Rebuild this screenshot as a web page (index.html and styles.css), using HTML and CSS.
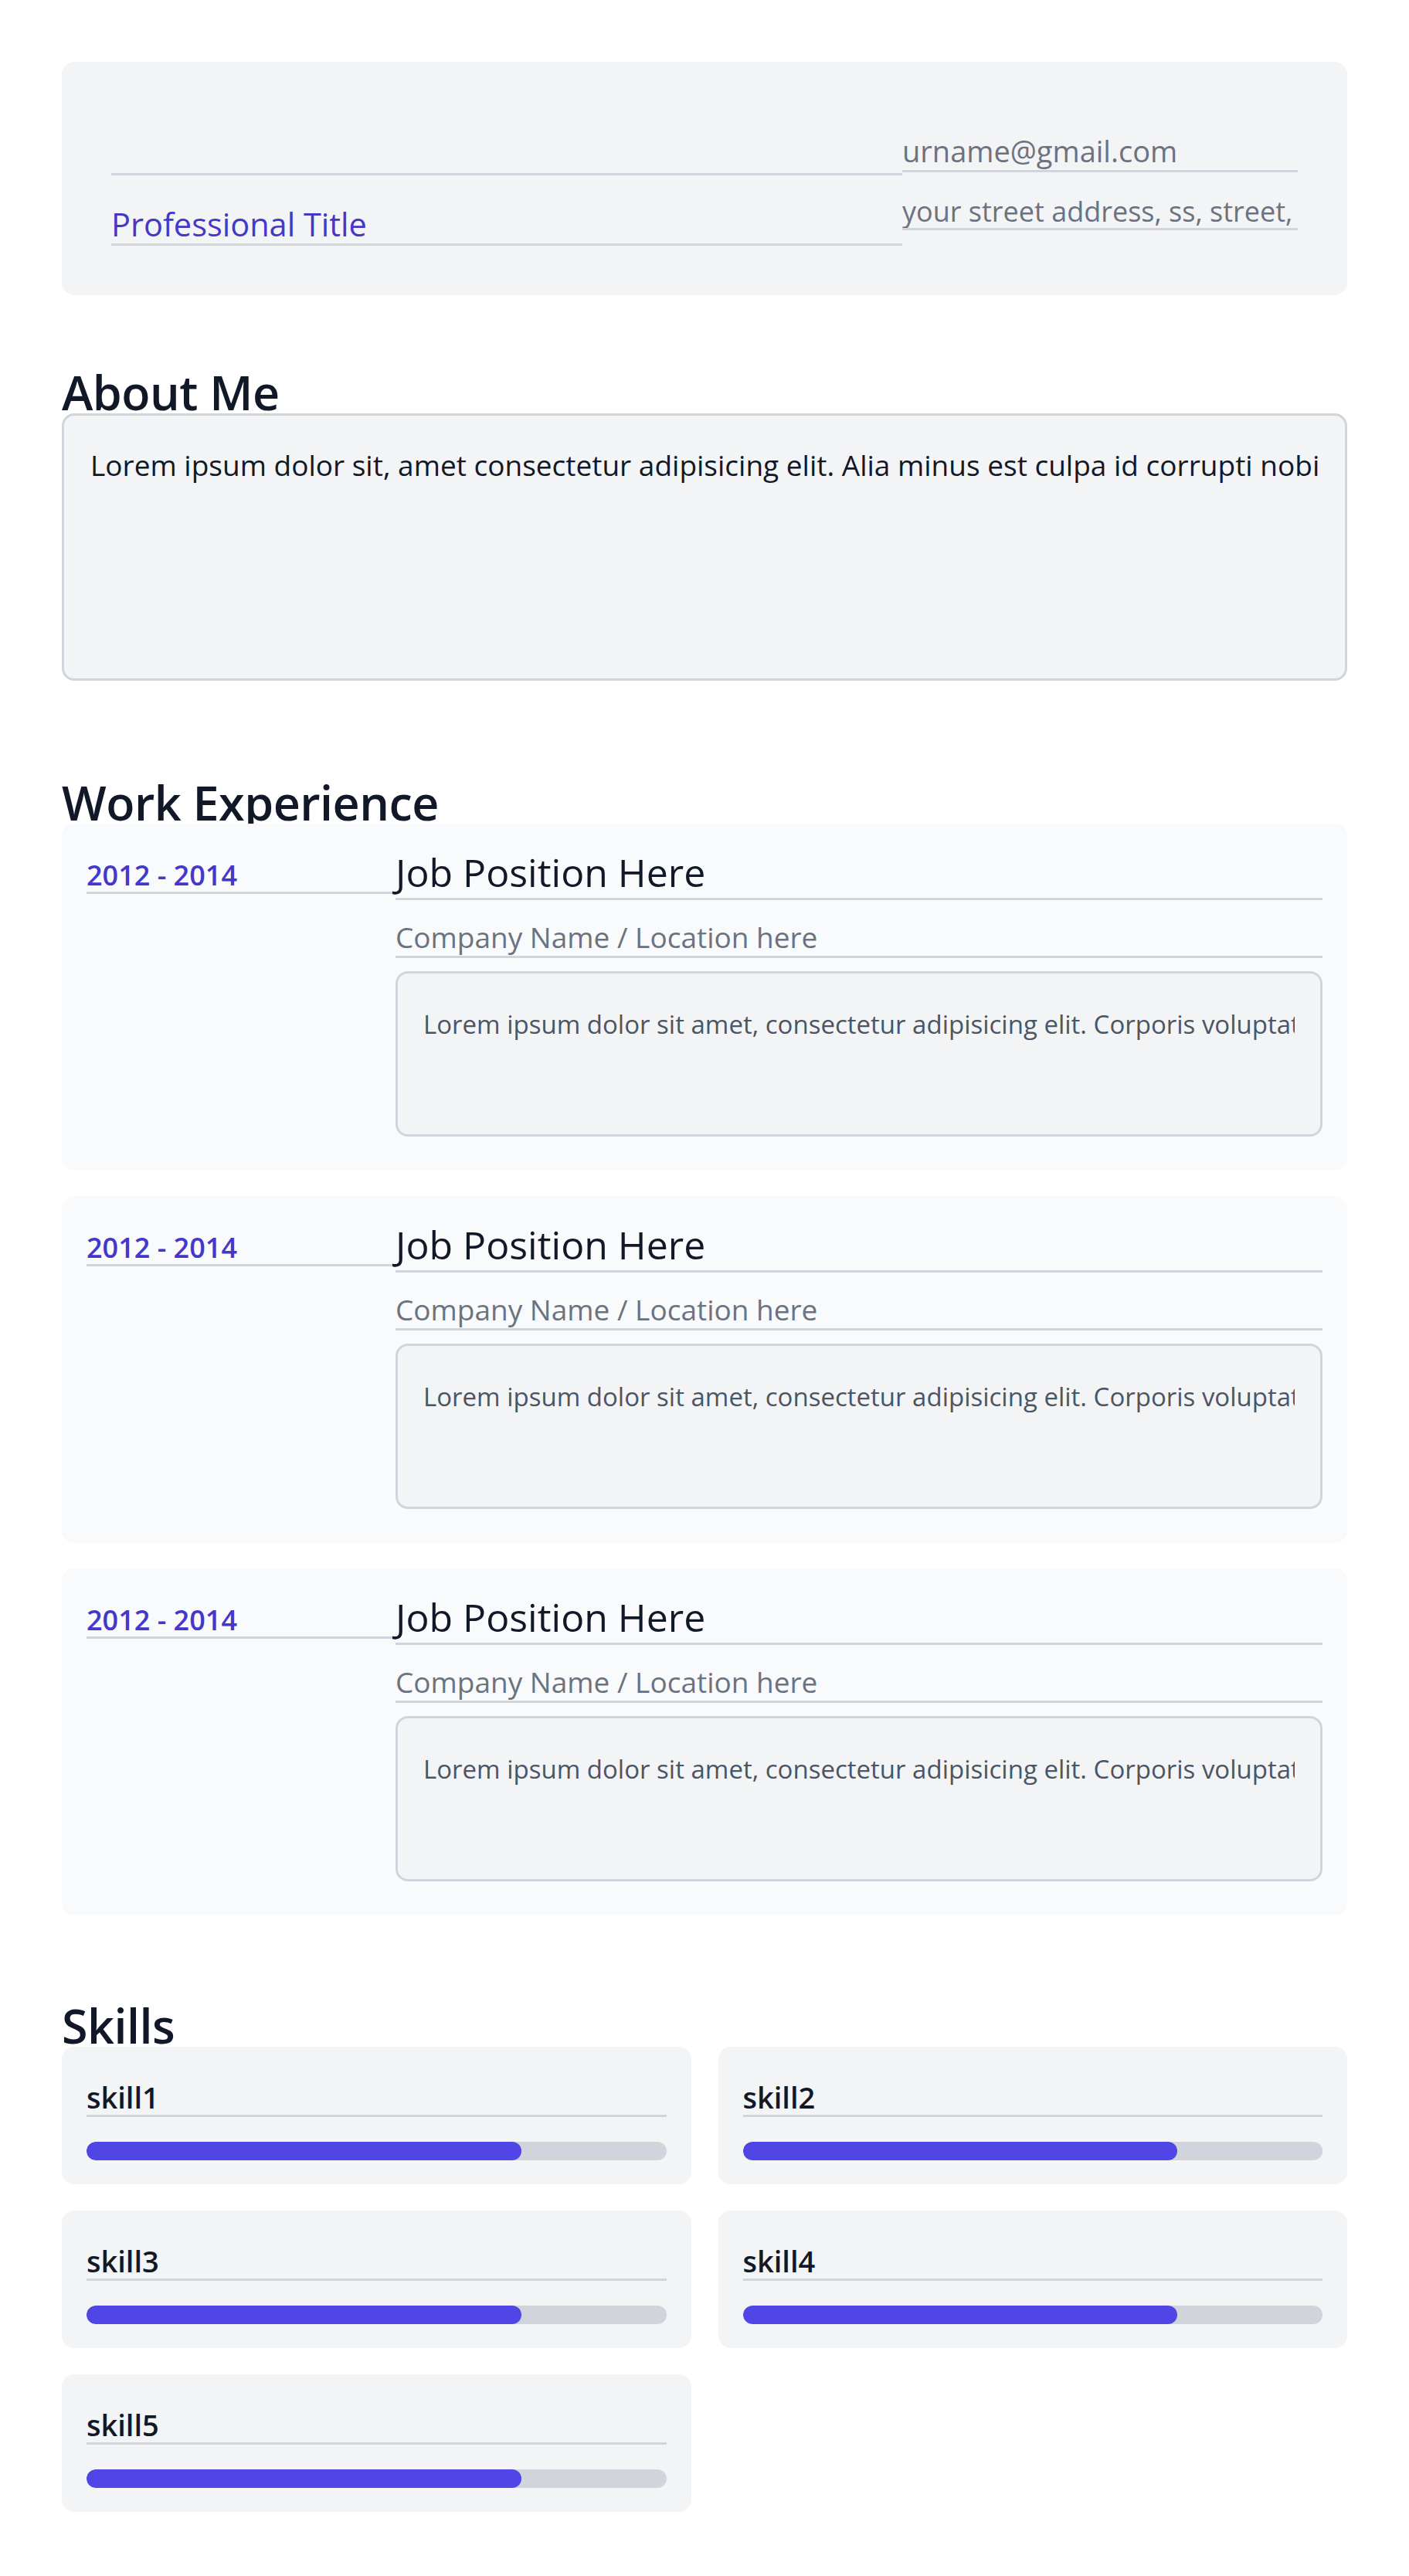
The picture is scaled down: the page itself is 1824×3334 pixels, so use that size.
FILE: index.html
```html
<!DOCTYPE html>
<html lang="en">
<head>
<meta charset="utf-8">
<title>Resume</title>
<link rel="stylesheet" href="styles.css">
</head>
<body>
<main class="page">
  <section class="header-card">
    <div class="header-main">
      <div class="field field-name"></div>
      <div class="field field-title">Professional Title</div>
    </div>
    <div class="header-side">
      <div class="field field-email">urname@gmail.com</div>
      <div class="field field-address">your street address, ss, street, city, state, country</div>
    </div>
  </section>

  <h2 class="section-title about-title">About Me</h2>
  <div class="about-box"><div class="clip-text">Lorem ipsum dolor sit, amet consectetur adipisicing elit. Alia minus est culpa id corrupti nobis ullam harum, porro veniam facilis.</div></div>

  <h2 class="section-title work-title">Work Experience</h2>
  <div class="jobs">
    <article class="job-card">
      <div class="field field-date">2012 - 2014</div>
      <div class="job-main">
        <div class="field field-position">Job Position Here</div>
        <div class="field field-company">Company Name / Location here</div>
        <div class="job-desc"><div class="clip-text">Lorem ipsum dolor sit amet, consectetur adipisicing elit. Corporis voluptatibus, quia rem.</div></div>
      </div>
    </article>
    <article class="job-card">
      <div class="field field-date">2012 - 2014</div>
      <div class="job-main">
        <div class="field field-position">Job Position Here</div>
        <div class="field field-company">Company Name / Location here</div>
        <div class="job-desc"><div class="clip-text">Lorem ipsum dolor sit amet, consectetur adipisicing elit. Corporis voluptatibus, quia rem.</div></div>
      </div>
    </article>
    <article class="job-card">
      <div class="field field-date">2012 - 2014</div>
      <div class="job-main">
        <div class="field field-position">Job Position Here</div>
        <div class="field field-company">Company Name / Location here</div>
        <div class="job-desc"><div class="clip-text">Lorem ipsum dolor sit amet, consectetur adipisicing elit. Corporis voluptatibus, quia rem.</div></div>
      </div>
    </article>
  </div>

  <h2 class="section-title skills-title">Skills</h2>
  <div class="skills">
    <div class="skill-card">
      <div class="field field-skill">skill1</div>
      <div class="bar"><div class="bar-fill" style="width: 75%"></div></div>
    </div>
    <div class="skill-card">
      <div class="field field-skill">skill2</div>
      <div class="bar"><div class="bar-fill" style="width: 75%"></div></div>
    </div>
    <div class="skill-card">
      <div class="field field-skill">skill3</div>
      <div class="bar"><div class="bar-fill" style="width: 75%"></div></div>
    </div>
    <div class="skill-card">
      <div class="field field-skill">skill4</div>
      <div class="bar"><div class="bar-fill" style="width: 75%"></div></div>
    </div>
    <div class="skill-card">
      <div class="field field-skill">skill5</div>
      <div class="bar"><div class="bar-fill" style="width: 75%"></div></div>
    </div>
  </div>
</main>
</body>
</html>
```

FILE: styles.css
```css
* { box-sizing: border-box; }

body {
  margin: 0;
  background: #ffffff;
  font-family: "Open Sans", "Noto Sans", "Liberation Sans", sans-serif;
  color: #111827;
}

.page {
  padding: 80px 80px 83px;
}

/* generic underlined field */
.field {
  border-bottom: 3px solid #d1d5db;
  line-height: 1.25;
  white-space: nowrap;
}

.clip-text {
  white-space: nowrap;
  overflow: hidden;
  line-height: 1.4;
}

/* header */
.header-card {
  background: #f3f4f6;
  border-radius: 16px;
  padding: 64px;
  display: grid;
  grid-template-columns: 1024px 512px;
  align-items: start;
}
.header-main, .header-side {
  display: flex;
  flex-direction: column;
  min-width: 0;
}
.field-name { height: 83px; }
.field-title {
  height: 91px;
  padding-top: 38px;
  font-size: 41.5px;
  color: #4338ca;
}
.field-email {
  height: 79px;
  padding-top: 28px;
  font-size: 38px;
  color: #6b7280;
}
.field-address {
  height: 75px;
  padding-top: 28px;
  font-size: 36px;
  color: #6b7280;
  overflow: hidden;
}

/* section titles */
.section-title {
  margin: 0;
  font-size: 61px;
  font-weight: 600;
  letter-spacing: -0.5px;
  line-height: 55px;
  height: 55px;
  overflow: hidden;
  color: #111827;
}
.about-title { margin-top: 98px; }
.work-title { margin-top: 130px; }
.skills-title { margin-top: 115px; }

/* about */
.about-box {
  height: 346px;
  background: #f3f4f6;
  border: 3px solid #d1d5db;
  border-radius: 16px;
  padding: 38px 34px 0;
  font-size: 37px;
  color: #111827;
}

/* work */
.jobs {
  display: flex;
  flex-direction: column;
  gap: 33px;
}
.job-card {
  background: #f9fafb;
  border-radius: 16px;
  padding: 32px 32px 44px;
  display: grid;
  grid-template-columns: 400px minmax(0, 1fr);
  align-items: start;
}
.field-date {
  height: 59px;
  padding-top: 12px;
  font-size: 36px;
  font-weight: 600;
  color: #4338ca;
}
.job-main {
  display: flex;
  flex-direction: column;
  min-width: 0;
}
.field-position {
  height: 67px;
  padding-top: 0;
  font-size: 50px;
  font-weight: 500;
  color: #111827;
}
.field-company {
  height: 75px;
  padding-top: 25px;
  font-size: 37px;
  color: #6b7280;
}
.job-desc {
  margin-top: 17px;
  height: 214px;
  background: #f3f4f6;
  border: 3px solid #d1d5db;
  border-radius: 16px;
  padding: 43px 33px 0;
  font-size: 33px;
  color: #4b5563;
}

/* skills */
.skills {
  display: grid;
  grid-template-columns: 1fr 1fr;
  column-gap: 35px;
  row-gap: 34px;
}
.skill-card {
  background: #f3f4f6;
  border-radius: 16px;
  padding: 32px 32px 31px;
}
.field-skill {
  height: 59px;
  padding-top: 10px;
  font-size: 38px;
  font-weight: 600;
  color: #111827;
}
.bar {
  margin-top: 32px;
  height: 24px;
  border-radius: 12px;
  background: #d1d5db;
  overflow: hidden;
}
.bar-fill {
  height: 100%;
  border-radius: 12px;
  background: #4f46e5;
}
```
